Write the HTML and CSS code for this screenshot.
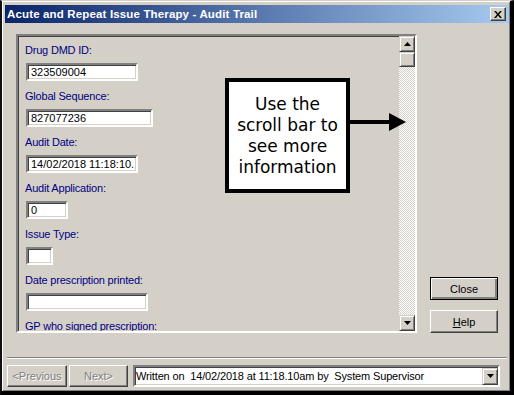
FILE: index.html
```html
<!DOCTYPE html>
<html lang="en">
<head>
    <meta charset="UTF-8">
    <title>Acute and Repeat Issue Therapy - Audit Trail</title>
    <link rel="stylesheet" href="styles.css">
</head>
<body>
    <div class="window">
        <div class="titlebar">
            <span class="title">Acute and Repeat Issue Therapy - Audit Trail</span>
            <div class="tb-close">
                <svg width="8" height="7" viewBox="0 0 8 7"><path d="M0 0h2l2 2.5L6 0h2L5 3.5 8 7H6L4 4.5 2 7H0l3-3.5z" fill="#000"/></svg>
            </div>
        </div>

        <div class="main">
            <div class="scrollbox">
                <div class="fields">
                    <div class="label">Drug DMD ID:</div>
                    <div class="edit" style="width: 112px">323509004</div>
                    <div class="label">Global Sequence:</div>
                    <div class="edit" style="width: 127px">827077236</div>
                    <div class="label">Audit Date:</div>
                    <div class="edit" style="width: 112px">14/02/2018 11:18:10.</div>
                    <div class="label">Audit Application:</div>
                    <div class="edit" style="width: 42px">0</div>
                    <div class="label">Issue Type:</div>
                    <div class="edit" style="width: 27px"></div>
                    <div class="label">Date prescription printed:</div>
                    <div class="edit" style="width: 122px"></div>
                    <div class="label">GP who signed prescription:</div>
                </div>
                <div class="vscroll">
                    <div class="sbtn">
                        <svg width="7" height="4" viewBox="0 0 7 4"><path d="M3.5 0L7 4H0z" fill="#000"/></svg>
                    </div>
                    <div class="sbtn thumb"></div>
                    <div class="track"></div>
                    <div class="sbtn">
                        <svg width="7" height="4" viewBox="0 0 7 4"><path d="M0 0h7L3.5 4z" fill="#000"/></svg>
                    </div>
                </div>
            </div>

            <div class="side">
                <div class="btn default">Close</div>
                <div class="btn"><u>H</u>elp</div>
            </div>

            <!-- annotation over the dialog -->
            <div class="callout">Use the<br>scroll bar to<br>see more<br>information</div>
            <svg class="pointer" width="56" height="18" viewBox="0 0 56 18">
                <path d="M0 7h40v4H0z" fill="#000"/>
                <path d="M39 0l17 9-17 9z" fill="#000"/>
            </svg>
        </div>

        <div class="separator"></div>

        <div class="footer">
            <div class="btn disabled prev">&lt;Previous</div>
            <div class="btn disabled next">Next&gt;</div>
            <div class="combo">
                <span class="combo-text">Written on&nbsp; 14/02/2018 at 11:18.10am by&nbsp; System Supervisor</span>
                <div class="sbtn dd">
                    <svg width="7" height="4" viewBox="0 0 7 4"><path d="M0 0h7L3.5 4z" fill="#000"/></svg>
                </div>
            </div>
        </div>
    </div>
</body>
</html>
```

FILE: styles.css
```css
body {
    margin: 0;
    background-color: #d4d0c8;
    font-family: "Liberation Sans", Arial, sans-serif;
    font-size: 11px;
    color: #000;
}
.window {
    width: 514px;
    height: 395px;
    box-sizing: border-box;
    border-style: solid;
    border-width: 1px 4px 4px 2px;
    border-color: #d4d0c8 #000 #000 #111;
    padding: 4px 1px 0 3px;
    display: flex;
    flex-direction: column;
    box-shadow: inset 1px 1px #fff, inset -1px -1px #808080;
}
.titlebar {
    height: 18px;
    flex-shrink: 0;
    display: flex;
    align-items: center;
    justify-content: space-between;
    padding: 0 3px 0 2px;
    background: linear-gradient(to right, #0a246a, #a6caf0);
}
.title {
    color: #fff;
    font-weight: bold;
    font-size: 11.5px;
    letter-spacing: 0.15px;
}
.tb-close {
    width: 16px;
    height: 14px;
    box-sizing: border-box;
    display: flex;
    align-items: center;
    justify-content: center;
    background-color: #d4d0c8;
    border: 1px solid;
    border-color: #fff #404040 #404040 #fff;
    box-shadow: inset -1px -1px #808080;
}
.main {
    position: relative; /* for the callout */
    height: 334px;
    flex-shrink: 0;
    box-sizing: border-box;
    padding: 11px 0 0 11px;
    display: flex;
    align-items: flex-start;
}
.scrollbox {
    width: 401px;
    height: 299px;
    box-sizing: border-box;
    display: flex;
    border: 2px solid;
    border-color: #808080 #fff #fff #808080;
    box-shadow: inset 1px 1px #404040, inset -1px -1px #d4d0c8;
    overflow: hidden;
}
.fields {
    flex: 1;
    padding: 7px 0 0 7px;
    overflow: hidden;
}
.label {
    color: #000080;
    font-size: 11px;
    line-height: 14px;
    letter-spacing: -0.2px;
    white-space: nowrap;
}
.edit {
    height: 18px;
    box-sizing: border-box;
    margin: 6px 0 8px 1px;
    padding: 1px 0 0 3px;
    background-color: #fff;
    border: 2px solid;
    border-color: #808080 #fff #fff #808080;
    box-shadow: inset 1px 1px #404040, inset -1px -1px #d4d0c8;
    font-size: 11px;
    line-height: 13px;
    white-space: nowrap;
    overflow: hidden;
}
.vscroll {
    width: 16px;
    display: flex;
    flex-direction: column;
}
.sbtn {
    width: 16px;
    height: 16px;
    box-sizing: border-box;
    flex-shrink: 0;
    display: flex;
    align-items: center;
    justify-content: center;
    background-color: #d4d0c8;
    border: 1px solid;
    border-color: #d4d0c8 #404040 #404040 #d4d0c8;
    box-shadow: inset 1px 1px #fff, inset -1px -1px #808080;
}
.thumb {
    height: 15px;
}
.track {
    flex: 1;
    background: repeating-conic-gradient(#fff 0 25%, #d4d0c8 0 50%) 0 0 / 2px 2px;
}
.side {
    width: 68px;
    height: 299px;
    margin-left: 13px;
    display: flex;
    flex-direction: column;
    justify-content: flex-end;
    gap: 10px;
}
.btn {
    height: 23px;
    box-sizing: border-box;
    display: flex;
    align-items: center;
    justify-content: center;
    background-color: #d4d0c8;
    border: 1px solid;
    border-color: #fff #404040 #404040 #fff;
    box-shadow: inset -1px -1px #808080;
    font-size: 11px;
}
.btn.default {
    border-color: #000;
    box-shadow: inset 1px 1px #fff, inset -2px -2px #808080;
}
.callout {
    position: absolute;
    left: 220px;
    top: 55px;
    width: 125px;
    height: 115px;
    box-sizing: border-box;
    border: 4px solid #000;
    background-color: #fff;
    display: flex;
    align-items: center;
    justify-content: center;
    text-align: center;
    font-family: "DejaVu Sans", sans-serif;
    font-size: 17px;
    line-height: 21px;
}
.pointer {
    position: absolute;
    left: 345px;
    top: 90px;
}
.separator {
    height: 2px;
    flex-shrink: 0;
    margin: 0 2px;
    border-top: 1px solid #808080;
    border-bottom: 1px solid #fff;
    box-sizing: border-box;
}
.footer {
    display: flex;
    align-items: flex-start;
    padding: 6px 0 0 2px;
}
.footer .btn {
    height: 22px;
}
.prev {
    width: 60px;
}
.next {
    width: 59px;
    margin-left: 2px;
}
.disabled {
    color: #808080;
    text-shadow: 1px 1px #fff;
}
.combo {
    width: 367px;
    height: 22px;
    margin-left: 5px;
    box-sizing: border-box;
    display: flex;
    align-items: center;
    justify-content: space-between;
    padding-left: 1px;
    background-color: #fff;
    border: 2px solid;
    border-color: #808080 #fff #fff #808080;
    box-shadow: inset 1px 1px #404040, inset -1px -1px #d4d0c8;
    font-size: 11px;
    letter-spacing: -0.15px;
    white-space: nowrap;
}
.dd {
    height: 17px;
}
```
